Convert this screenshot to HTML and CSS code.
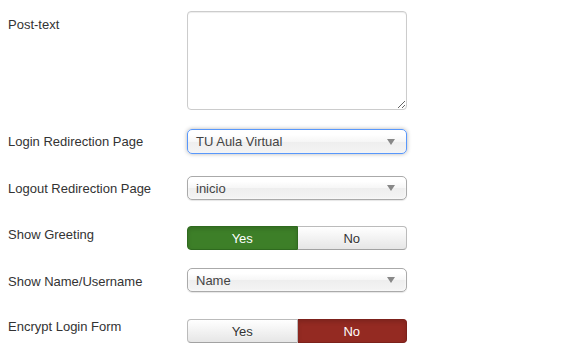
FILE: index.html
```html
<!DOCTYPE html>
<html lang="en">
<head>
  <meta charset="UTF-8">
  <title>Login Module Options</title>
  <link rel="stylesheet" href="styles.css">
</head>
<body>
  <form class="options">
    <div class="row row-text">
      <label class="label" for="posttext">Post-text</label>
      <textarea id="posttext" class="textarea"></textarea>
    </div>

    <div class="row row-login">
      <label class="label">Login Redirection Page</label>
      <div class="select focused">
        <span>TU Aula Virtual</span>
        <i class="arrow"></i>
      </div>
    </div>

    <div class="row row-logout">
      <label class="label">Logout Redirection Page</label>
      <div class="select">
        <span>inicio</span>
        <i class="arrow"></i>
      </div>
    </div>

    <div class="row row-greeting">
      <label class="label">Show Greeting</label>
      <div class="toggle">
        <button type="button" class="btn btn-yes active">Yes</button>
        <button type="button" class="btn btn-no">No</button>
      </div>
    </div>

    <div class="row row-name">
      <label class="label">Show Name/Username</label>
      <div class="select">
        <span>Name</span>
        <i class="arrow"></i>
      </div>
    </div>

    <div class="row row-encrypt">
      <label class="label">Encrypt Login Form</label>
      <div class="toggle">
        <button type="button" class="btn btn-yes">Yes</button>
        <button type="button" class="btn btn-no active">No</button>
      </div>
    </div>
  </form>
</body>
</html>
```

FILE: styles.css
```css
body {
  margin: 0;
  background: #fff;
  font-family: "Liberation Sans", Arial, sans-serif;
  font-size: 13px;
  color: #333;
}
.options {
  padding: 11px 0 0 8px;
}
.row {
  display: flex;
  align-items: flex-start;
}
.label {
  width: 179px;
  line-height: 18px;
  color: #333;
}
.row-text .label { padding-top: 5px; }
.row-login { margin-top: 19px; }
.row-login .label { padding-top: 4px; }
.row-logout { margin-top: 22px; }
.row-logout .label { padding-top: 4px; }
.row-greeting { margin-top: 26px; }
.row-greeting .label { padding-top: 0; }
.row-name { margin-top: 18px; }
.row-name .label { padding-top: 5px; }
.row-encrypt { margin-top: 27px; }
.row-encrypt .label { margin-top: -1px; }

.textarea {
  box-sizing: border-box;
  width: 220px;
  height: 99px;
  margin: 0;
  border: 1px solid #ccc;
  border-radius: 4px;
  box-shadow: inset 0 1px 1px rgba(0,0,0,0.075);
  background: #fff;
  font: inherit;
}
.select {
  box-sizing: border-box;
  width: 220px;
  height: 24px;
  display: flex;
  align-items: center;
  justify-content: space-between;
  padding: 0 11px 0 8px;
  border: 1px solid #aaa;
  border-radius: 5px;
  background: linear-gradient(#fff 20%, #f6f6f6 50%, #eee 52%, #f4f4f4 100%);
  box-shadow: inset 0 0 3px #fff, 0 1px 1px rgba(0,0,0,0.1);
  color: #444;
}
.row-login .select { height: 25px; }
.select.focused {
  border-color: #5897fb;
  box-shadow: 0 0 4px rgba(0,0,0,0.3);
}
.arrow {
  width: 0;
  height: 0;
  border-left: 4px solid transparent;
  border-right: 4px solid transparent;
  border-top: 6px solid #888;
}
.toggle {
  display: flex;
  width: 220px;
}
.btn {
  box-sizing: border-box;
  flex: 1;
  height: 24px;
  margin: 0;
  padding: 0;
  border: 1px solid #bbb;
  border-bottom-color: #a2a2a2;
  background: linear-gradient(#fff, #e6e6e6);
  color: #333;
  font: inherit;
  font-size: 13px;
  text-shadow: 0 1px 1px rgba(255,255,255,0.75);
}
.btn-yes {
  border-radius: 4px 0 0 4px;
}
.btn-no {
  border-radius: 0 4px 4px 0;
  border-left: 0;
}
.btn-yes.active {
  background: #3d7f28;
  border-color: #2f6a1f;
  color: #fff;
  text-shadow: none;
  box-shadow: inset 0 2px 4px rgba(0,0,0,0.15);
}
.btn-no.active {
  background: #942a22;
  border-color: #7c211b;
  color: #fff;
  text-shadow: none;
  box-shadow: inset 0 2px 4px rgba(0,0,0,0.15);
}
```
